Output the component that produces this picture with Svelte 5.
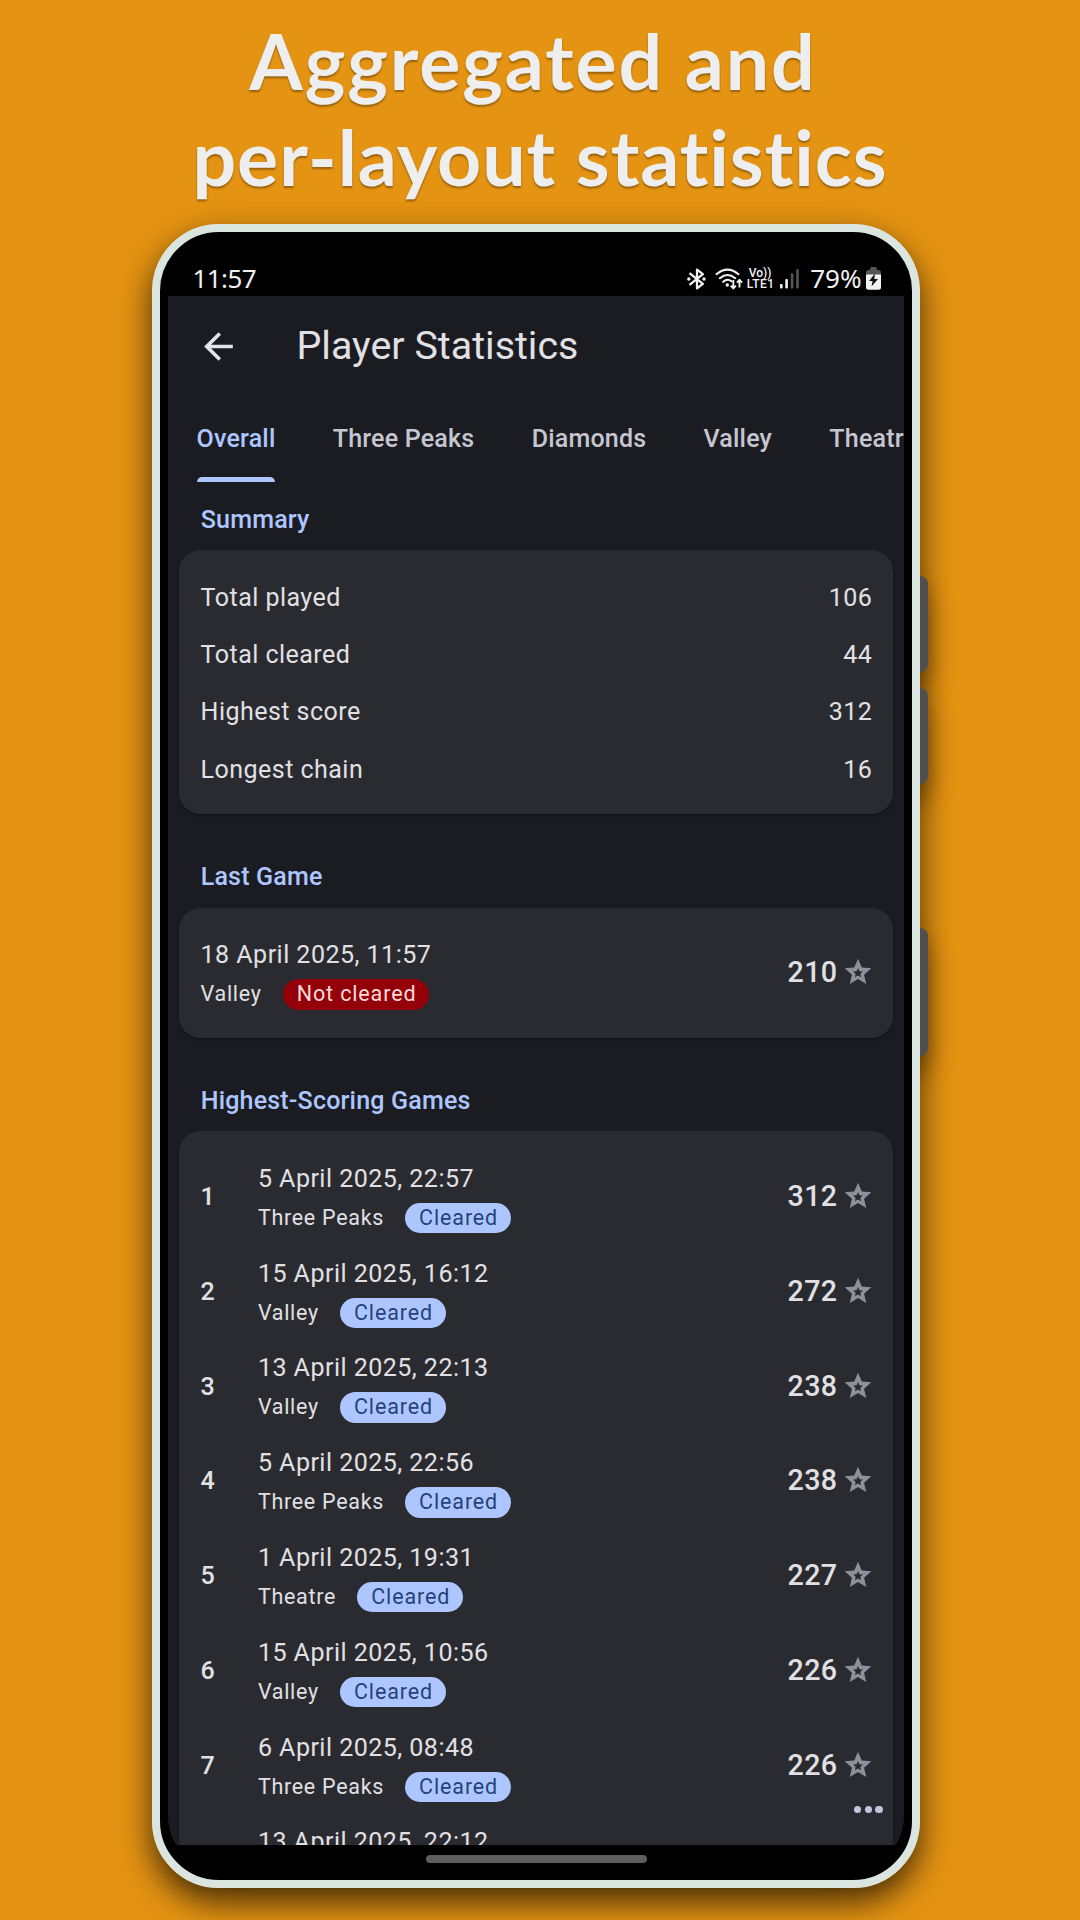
<script>
  const tabs = ['Overall', 'Three Peaks', 'Diamonds', 'Valley', 'Theatre'];
  const summary = [
    ['Total played', 106],
    ['Total cleared', 44],
    ['Highest score', 312],
    ['Longest chain', 16],
  ];
  const last = { date: '18 April 2025, 11:57', layout: 'Valley', cleared: false, score: 210 };
  const games = [
    { date: '5 April 2025, 22:57', layout: 'Three Peaks', cleared: true, score: 312 },
    { date: '15 April 2025, 16:12', layout: 'Valley', cleared: true, score: 272 },
    { date: '13 April 2025, 22:13', layout: 'Valley', cleared: true, score: 238 },
    { date: '5 April 2025, 22:56', layout: 'Three Peaks', cleared: true, score: 238 },
    { date: '1 April 2025, 19:31', layout: 'Theatre', cleared: true, score: 227 },
    { date: '15 April 2025, 10:56', layout: 'Valley', cleared: true, score: 226 },
    { date: '6 April 2025, 08:48', layout: 'Three Peaks', cleared: true, score: 226 },
  ];
  const nextDate = '13 April 2025, 22:12';
</script>

{#snippet game(g, rank)}
  <div class="game">
    {#if rank}<span class="rank">{rank}</span>{/if}
    <div class="info">
      <div class="date">{g.date}</div>
      <div class="sub">
        <span>{g.layout}</span>
        <span class="pill" class:lost={!g.cleared}>{g.cleared ? 'Cleared' : 'Not cleared'}</span>
      </div>
    </div>
    <span class="score">{g.score}</span>
    <svg class="star" viewBox="0 0 24 24">
      <path fill-rule="evenodd" d="M12 2L9.19 8.63 2 9.24l5.46 4.73L5.82 21 12 17.27 18.18 21l-1.64-7.03L22 9.24l-7.19-.61zM12 9l1.1 2.4 2.5.3-1.85 1.75.5 2.5L12 14.700l-2.250 1.250.5-2.500-1.850-1.750 2.500-.3z" />
    </svg>
  </div>
{/snippet}

<main class="page">
  <h1><span class="l1">Aggregated and</span><span class="l2">per-layout statistics</span></h1>

  <div class="device">
    <i class="key k1"></i><i class="key k2"></i><i class="key k3"></i>
    <div class="phone">
      <div class="screen">
        <div class="status">
          <span class="clock">11:57</span>
          <svg class="bt" viewBox="0 0 19 22">
            <path d="M2.500 5.200L15.900 15.800 10 20.300V1.700l5.900 4.500L2.500 16.800" fill="none" stroke="#f2f2f2" stroke-width="2.300" stroke-linejoin="round" />
            <circle cx="1.800" cy="11" r="1.700" fill="#f2f2f2" /><circle cx="17" cy="11" r="1.700" fill="#f2f2f2" />
          </svg>
          <svg class="wifi" viewBox="0 0 29 22">
            <g fill="none" stroke="#f2f2f2" stroke-width="2.100" stroke-linecap="round">
              <path d="M1.500 6.200Q12.500-3 23.500 6.200M4.800 10.200Q12.500 3.800 20.200 10.200M8.200 13.800Q12.500 10 16.400 13.300" />
            </g>
            <circle cx="12.300" cy="17" r="1.700" fill="#f2f2f2" />
            <path d="M18.300 12v8M15.700 17.600l2.600 2.700 2.600-2.700M24.500 19.500v-7M21.900 14.600l2.600-2.700 2.600 2.700" fill="none" stroke="#f2f2f2" stroke-width="1.900" />
          </svg>
          <span class="volte"><b>Vo))</b><b class="lte">LTE1</b></span>
          <svg class="signal" viewBox="0 0 19 22">
            <g fill="#f2f2f2"><rect x="0" y="16" width="2.600" height="4.500" rx="1" /><rect x="5.300" y="11" width="2.600" height="9.500" rx="1" /></g>
            <g fill="#555"><rect x="10.800" y="5.300" width="2.600" height="15.200" rx="1" /><rect x="16.200" y="1" width="2.600" height="19.500" rx="1" /></g>
          </svg>
          <span class="pct">79%</span>
          <svg class="batt" viewBox="0 0 15 23">
            <path d="M0 8V5.500Q0 3 2.500 3H4V2Q4 0 6 0h3q2 0 2 2v1h1.500Q15 3 15 5.500V8z" fill="#555" />
            <path d="M0 7.500h15v12.700q0 2.500-2.500 2.500h-10Q0 22.700 0 20.200z" fill="#f2f2f2" />
            <path d="M9 6.500L3 14h3.600L5.500 19.500 12 12H8.300z" fill="#111" />
          </svg>
        </div>

        <div class="app">
          <header>
            <svg class="back" viewBox="0 0 24 24"><path d="M20 11H7.830l5.590-5.590L12 4l-8 8 8 8 1.410-1.410L7.830 13H20z" /></svg>
            <h2>Player Statistics</h2>
          </header>
          <nav>
            {#each tabs as t, i}<span class="tab" class:on={i === 0}>{t}</span>{/each}
          </nav>

          <section>
            <h3>Summary</h3>
            <div class="card">
              {#each summary as [label, value]}
                <div class="row"><span>{label}</span><span>{value}</span></div>
              {/each}
            </div>
          </section>
          <section>
            <h3>Last Game</h3>
            <div class="card">{@render game(last, 0)}</div>
          </section>
          <section>
            <h3>Highest-Scoring Games</h3>
            <div class="card">
              {#each games as g, i}{@render game(g, i + 1)}{/each}
              <div class="game next"><div class="info"><div class="date">{nextDate}</div></div></div>
            </div>
          </section>
          <div class="more"><i></i><i></i><i></i></div>
        </div>
        <div class="home"><i></i></div>
      </div>
    </div>
  </div>
</main>

<style>
  :global(body) { margin: 0; background: #e49312; }
  .page {
    box-sizing: border-box; width: 1080px; height: 1920px; overflow: hidden;
    background: #e49312; font-family: Roboto, sans-serif;
    display: flex; flex-direction: column;
  }
  h1 {
    margin: 0; height: 224px; box-sizing: border-box; padding-top: 12px;
    display: flex; flex-direction: column; align-items: center;
    font: 700 77px/96px Lato, sans-serif; color: #eee; white-space: nowrap;
    text-shadow: 0 2px 2px rgba(0, 0, 0, .35);
  }
  .l1 { letter-spacing: 1.9px; padding-right: 14px; }
  .l2 { letter-spacing: .95px; padding-left: 0; }

  .device {
    position: relative; z-index: 0; width: 768px; height: 1664px; margin-left: 152px; flex: none;
    border-radius: 67px; box-shadow: 0 14px 32px rgba(0, 0, 0, .7);
  }
  .key {
    position: absolute; z-index: -1; right: -8px; width: 40px; border-radius: 8px;
    background: #4f4f4f; box-shadow: 0 14px 24px rgba(0, 0, 0, .4);
  }
  .k1 { top: 352px; height: 96px; }
  .k2 { top: 464px; height: 96px; }
  .k3 { top: 704px; height: 128px; }
  .phone {
    box-sizing: border-box; width: 100%; height: 100%; padding: 8px;
    border: 8px solid #dbe5df; border-radius: 67px; background: #000;
  }
  .screen {
    height: 100%; border-radius: 56px; overflow: hidden; background: #000;
    display: flex; flex-direction: column;
  }

  .status {
    box-sizing: border-box; height: 56px; flex: none; padding: 21px 23.5px 0 24.5px;
    display: flex; align-items: center; color: #f0f0f0;
    font: 400 26px/35px "Noto Sans", sans-serif;
  }
  .status svg { flex: none; display: block; }
  .clock { letter-spacing: -.6px; flex: 1; margin-top: -1px; }
  .bt { width: 19px; height: 22px; }
  .wifi { width: 29px; height: 22px; margin-left: 9px; }
  .volte {
    display: flex; flex-direction: column; align-items: center;
    width: 26px; margin-left: 3px; font: 500 12px/11px Roboto, sans-serif;
  }
  .volte b { font-weight: 500; }
  .volte .lte { letter-spacing: .5px; margin-right: -1px; }
  .signal { width: 19px; height: 22px; margin-left: 7px; }
  .pct { margin: -1px 4px 0 11px; }
  .batt { width: 15px; height: 23px; }

  .app { position: relative; height: 1549px; flex: none; overflow: hidden; background: #1b1c21; color: #e1e0e4; }
  header { height: 101px; display: flex; align-items: center; padding-left: 28.5px; }
  .back { width: 43px; height: 43px; fill: #e3e2e6; margin-right: 57px; }
  h2 { margin: 0; font-size: 39.4px; line-height: 50px; font-weight: 400; margin-top: -2px; }
  nav { display: flex; gap: 57.3px; height: 86px; padding-left: 28.6px; }
  .tab {
    box-sizing: border-box; flex: none; height: 86px; padding-bottom: 3px; line-height: 83px;
    font-size: 25.06px; font-weight: 500; letter-spacing: .18px; color: #c5c6d0; position: relative;
  }
  .on { color: #adc6ff; }
  .on::after {
    content: ''; position: absolute; left: 0; right: 0; bottom: .6px; height: 5.5px;
    border-radius: 5.5px 5.5px 0 0; background: #adc6ff;
  }

  section { padding: 0 10.7px; }
  section + section { padding-top: 26.3px; }
  h3 {
    margin: 0; padding: 18.6px 22px 13.6px; font-size: 25.06px; line-height: 35px;
    font-weight: 500; letter-spacing: .18px; color: #adc6ff;
  }
  .card {
    padding: 17.7px 21px 17.5px 21.9px; border-radius: 21.5px; background: #2a2b30;
    box-shadow: 0 2px 3px rgba(0, 0, 0, .3);
  }
  .row {
    height: 57.26px; display: flex; justify-content: space-between; align-items: center;
    font-size: 25.06px; line-height: 31px; letter-spacing: .45px;
  }
  .row span { padding-top: 1.6px; }

  .game { height: 94.82px; display: flex; align-items: center; }
  .next { height: 60px; padding-left: 57.3px; }
  .rank { width: 57.3px; font-size: 25.06px; font-weight: 500; }
  .info { flex: 1; align-self: flex-start; padding-top: 14.7px; }
  .date { font-size: 25.06px; line-height: 30.4px; letter-spacing: .46px; }
  .sub {
    display: flex; gap: 20.9px; margin-top: 8.6px; height: 30.4px;
    font-size: 21.48px; line-height: 29px; letter-spacing: .72px;
  }
  .pill {
    height: 30.4px; padding: 0 13px 0 14.2px; border-radius: 16px;
    background: #adc6ff; color: #25427a; letter-spacing: .88px;
  }
  .lost { background: #93000a; color: #ffdad6; }
  .score { font-size: 28.64px; font-weight: 500; letter-spacing: .4px; margin-top: -1px; }
  .star { width: 32px; height: 32px; margin: -1px -2px 0 4.8px; fill: #8f9099; }

  .more { position: absolute; right: 21.5px; bottom: 32px; display: flex; gap: 3.5px; }
  .more i { width: 7.2px; height: 7.2px; border-radius: 50%; background: #c4c6dd; }
  .home { flex: 1; display: flex; justify-content: center; padding-top: 9.5px; }
  .home i { width: 221px; height: 8px; border-radius: 4px; background: #5e5e5e; }
</style>
